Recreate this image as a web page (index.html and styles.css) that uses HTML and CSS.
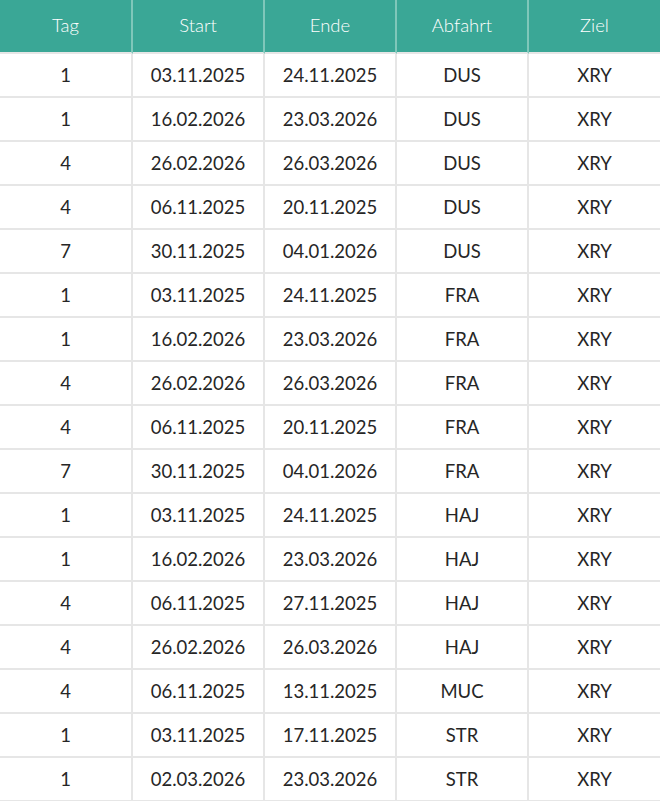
FILE: index.html
```html
<!DOCTYPE html>
<html lang="de">
<head>
<meta charset="utf-8">
<link rel="stylesheet" href="styles.css">
</head>
<body>
<div class="table">
  <div class="row head">
    <div class="cell">Tag</div><div class="cell">Start</div><div class="cell">Ende</div><div class="cell">Abfahrt</div><div class="cell">Ziel</div>
  </div>
  <div class="row"><div class="cell">1</div><div class="cell">03.11.2025</div><div class="cell">24.11.2025</div><div class="cell">DUS</div><div class="cell">XRY</div></div>
  <div class="row"><div class="cell">1</div><div class="cell">16.02.2026</div><div class="cell">23.03.2026</div><div class="cell">DUS</div><div class="cell">XRY</div></div>
  <div class="row"><div class="cell">4</div><div class="cell">26.02.2026</div><div class="cell">26.03.2026</div><div class="cell">DUS</div><div class="cell">XRY</div></div>
  <div class="row"><div class="cell">4</div><div class="cell">06.11.2025</div><div class="cell">20.11.2025</div><div class="cell">DUS</div><div class="cell">XRY</div></div>
  <div class="row"><div class="cell">7</div><div class="cell">30.11.2025</div><div class="cell">04.01.2026</div><div class="cell">DUS</div><div class="cell">XRY</div></div>
  <div class="row"><div class="cell">1</div><div class="cell">03.11.2025</div><div class="cell">24.11.2025</div><div class="cell">FRA</div><div class="cell">XRY</div></div>
  <div class="row"><div class="cell">1</div><div class="cell">16.02.2026</div><div class="cell">23.03.2026</div><div class="cell">FRA</div><div class="cell">XRY</div></div>
  <div class="row"><div class="cell">4</div><div class="cell">26.02.2026</div><div class="cell">26.03.2026</div><div class="cell">FRA</div><div class="cell">XRY</div></div>
  <div class="row"><div class="cell">4</div><div class="cell">06.11.2025</div><div class="cell">20.11.2025</div><div class="cell">FRA</div><div class="cell">XRY</div></div>
  <div class="row"><div class="cell">7</div><div class="cell">30.11.2025</div><div class="cell">04.01.2026</div><div class="cell">FRA</div><div class="cell">XRY</div></div>
  <div class="row"><div class="cell">1</div><div class="cell">03.11.2025</div><div class="cell">24.11.2025</div><div class="cell">HAJ</div><div class="cell">XRY</div></div>
  <div class="row"><div class="cell">1</div><div class="cell">16.02.2026</div><div class="cell">23.03.2026</div><div class="cell">HAJ</div><div class="cell">XRY</div></div>
  <div class="row"><div class="cell">4</div><div class="cell">06.11.2025</div><div class="cell">27.11.2025</div><div class="cell">HAJ</div><div class="cell">XRY</div></div>
  <div class="row"><div class="cell">4</div><div class="cell">26.02.2026</div><div class="cell">26.03.2026</div><div class="cell">HAJ</div><div class="cell">XRY</div></div>
  <div class="row"><div class="cell">4</div><div class="cell">06.11.2025</div><div class="cell">13.11.2025</div><div class="cell">MUC</div><div class="cell">XRY</div></div>
  <div class="row"><div class="cell">1</div><div class="cell">03.11.2025</div><div class="cell">17.11.2025</div><div class="cell">STR</div><div class="cell">XRY</div></div>
  <div class="row"><div class="cell">1</div><div class="cell">02.03.2026</div><div class="cell">23.03.2026</div><div class="cell">STR</div><div class="cell">XRY</div></div>
</div>
</body>
</html>
```

FILE: styles.css
```css
html, body {
  margin: 0;
  padding: 0;
  background: #ffffff;
}

.table {
  width: 660px;
  font-family: "Lato", "Noto Sans", sans-serif;
  font-size: 18.5px;
  font-weight: 400;
  color: #262626;
}

.row {
  display: grid;
  grid-template-columns: 133px 132px 132px 132px 131px;
  height: 44px;
}

.cell {
  display: flex;
  align-items: center;
  justify-content: center;
  border-right: 2px solid #e6e6e6;
  border-bottom: 2px solid #e6e6e6;
  box-sizing: border-box;
}

.cell:last-child {
  border-right: 0;
}

.head {
  height: 54px;
  background: #3aa796;
}

.head .cell {
  color: #ffffff;
  font-weight: 300;
  border-right-color: #7fc7ba;
  border-bottom-color: #e6e6e6;
  padding-bottom: 2px;
}
```
